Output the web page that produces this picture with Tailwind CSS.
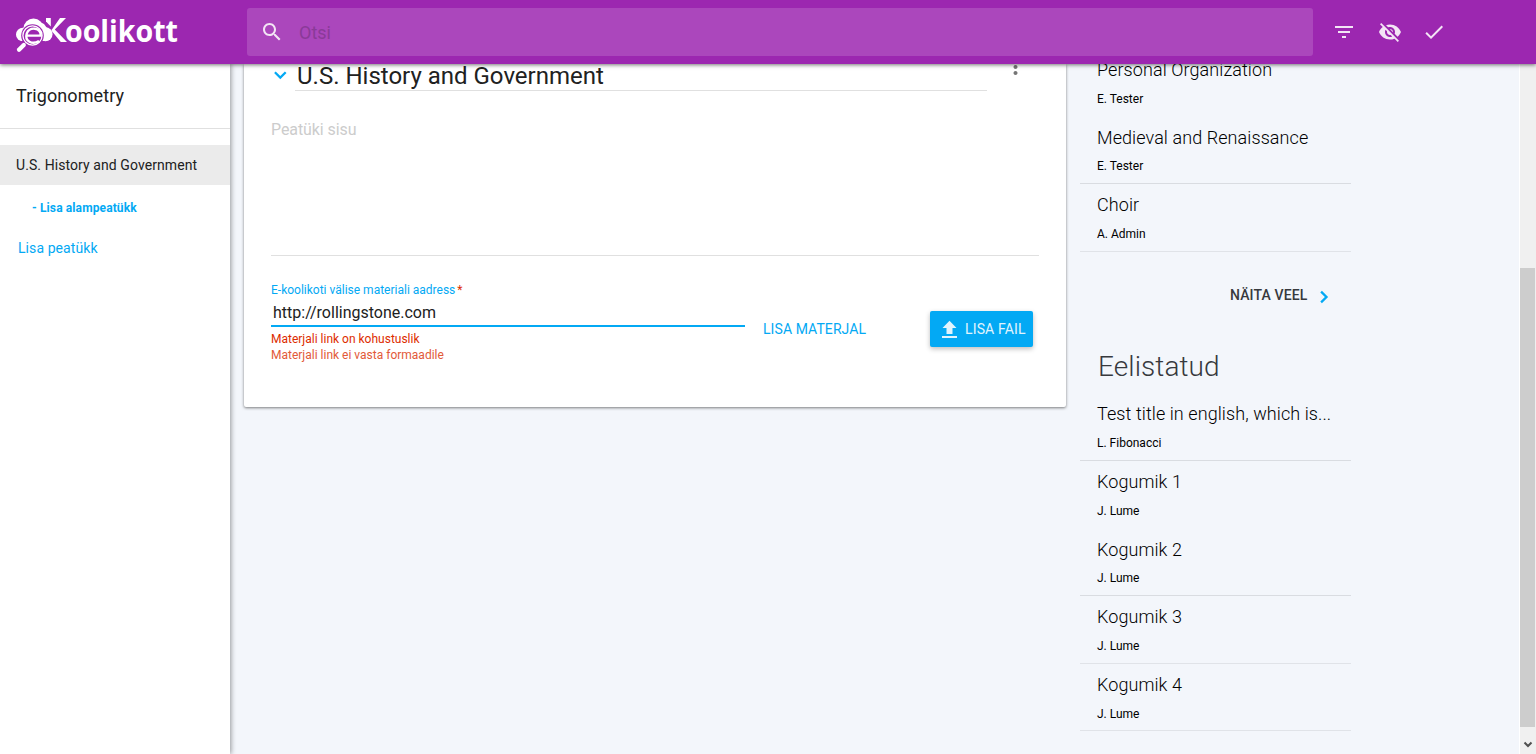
<!DOCTYPE html>
<html lang="et">
<head>
<meta charset="utf-8">
<title>e-Koolikott</title>
<script src="https://cdn.jsdelivr.net/npm/@tailwindcss/browser@4"></script>
</head>
<body class="h-[754px] w-[1536px] overflow-hidden bg-[#f3f6fb] font-[Roboto,sans-serif] tracking-[0.005em] text-[#212121] flex flex-col">
<header class="relative z-10 h-16 shrink-0 bg-[#9c27b0] flex items-center shadow-[0_1px_4px_rgba(0,0,0,0.55)]">
  <svg class="ml-4 shrink-0 overflow-visible" width="166" height="40" viewBox="0 0 166 40" fill="#fff">
    <circle cx="17.500" cy="16.500" r="10"/>
    <circle cx="6.800" cy="22.500" r="6.800"/>
    <path d="M7 28V16L18 7l10 5 6 8-4 9Z"/>
    <circle cx="29.500" cy="22.300" r="7"/>
    <path d="M30 6h4.800v8.500L30 9.500Z"/>
    <path d="M44 6h6L38.800 17.500 51 30h-6.200L35.300 18.500Z"/>
    <circle cx="16.500" cy="23.500" r="11.300" fill="#9c27b0"/>
    <path d="M9 31 2.500 38" stroke="#9c27b0" stroke-width="7"/>
    <circle cx="16.500" cy="23.500" r="9.600" fill="none" stroke="#fff" stroke-width="1.300"/>
    <path d="M7.800 33 3 37.800" stroke="#fff" stroke-width="4.200" stroke-linecap="round"/>
    <path d="M10.500 23.600h14.200c.3-8.600-11.200-9-13.900-2.200-2.600 8.200 5.700 11.600 12.200 7.600" fill="none" stroke="#fff" stroke-width="2.400"/>
    <text x="49" y="29.500" font-family="Open Sans, sans-serif" font-weight="700" font-size="31" letter-spacing="0" textLength="113" lengthAdjust="spacingAndGlyphs">oolikott</text>
  </svg>
  <div class="ml-[65px] w-[1066px] h-12 rounded-[3px] bg-[#ab47bc] flex items-center">
    <svg class="ml-[13px]" width="24" height="24" viewBox="0 0 24 24" fill="#f3e5f5"><path d="M15.500 14h-.79l-.28-.27C15.410 12.590 16 11.110 16 9.500 16 5.910 13.090 3 9.500 3S3 5.910 3 9.500 5.910 16 9.500 16c1.610 0 3.090-.59 4.230-1.570l.27.28v.79l5 4.990L20.490 19l-4.990-5zm-6 0C7.010 14 5 11.990 5 9.500S7.010 5 9.500 5 14 7.010 14 9.500 11.990 14 9.500 14z"/></svg>
    <span class="ml-[15px] text-[18px] tracking-normal text-[#8a3a98]">Otsi</span>
  </div>
  <div class="ml-[19px] flex items-center gap-[21px] text-[#f3e5f5]">
    <svg width="24" height="24" viewBox="0 0 24 24" fill="currentColor"><path d="M10 18h4v-2h-4v2zM3 6v2h18V6H3zm3 7h12v-2H6v2z"/></svg>
    <svg class="ml-px -mr-px" width="24" height="24" viewBox="0 0 24 24" fill="currentColor"><path d="M12 7c2.760 0 5 2.240 5 5 0 .65-.13 1.260-.36 1.830l2.920 2.920c1.510-1.260 2.700-2.890 3.430-4.750-1.730-4.390-6-7.500-11-7.500-1.400 0-2.740.25-3.980.7l2.160 2.160C10.740 7.130 11.350 7 12 7zM2 4.270l2.280 2.280.46.46C3.080 8.300 1.780 10.020 1 12c1.730 4.390 6 7.500 11 7.500 1.550 0 3.030-.3 4.380-.84l.42.42L19.730 22 21 20.730 3.270 3 2 4.270zM7.530 9.800l1.550 1.550c-.05.21-.08.43-.08.65 0 1.660 1.340 3 3 3 .22 0 .44-.03.65-.08l1.550 1.550c-.67.33-1.410.53-2.200.53-2.760 0-5-2.240-5-5 0-.79.2-1.530.53-2.200zm4.310-.78l3.150 3.150.02-.16c0-1.660-1.340-3-3-3l-.17.01z"/></svg>
    <svg width="24" height="24" viewBox="0 0 24 24" fill="currentColor"><path d="M9 16.170L4.830 12l-1.420 1.410L9 19 21 7l-1.410-1.410z"/></svg>
  </div>
</header>

<div class="flex h-[690px] shrink-0 overflow-hidden">
  <aside class="relative w-[230px] shrink-0 bg-white shadow-[1px_0_5px_rgba(0,0,0,0.4)]">
    <h2 class="h-[65px] border-b border-[#e0e0e0] px-4 text-[18px] leading-[63px]">Trigonometry</h2>
    <div class="mt-4 h-10 bg-[#ebebeb] px-4 text-sm leading-10">U.S. History and Government</div>
    <div class="pl-8 text-xs font-bold leading-[46px] tracking-[0.01em] text-[#03a9f4]">- Lisa alampeatükk</div>
    <div class="pl-[18px] text-sm leading-[34px] text-[#03a9f4]">Lisa peatükk</div>
  </aside>

  <main class="ml-[14px] h-[343px] w-[822px] shrink-0 rounded-b-[2px] bg-white px-[27px] shadow-[0_1px_3px_rgba(0,0,0,0.5)]">
    <div class="flex h-[27px]">
      <svg class="-ml-[3px] mt-[-1px]" width="24" height="24" viewBox="0 0 24 24" fill="#03a9f4"><path d="M7.710 8.390 12.300 12.970l4.590-4.580L18.500 10l-6.200 6.200L6.100 10Z"/></svg>
      <h1 class="ml-[3px] w-[692px] border-b border-[#e0e0e0] pl-[2px] text-[24px] leading-[25px] tracking-normal">U.S. History and Government</h1>
      <svg class="ml-4 -mt-[5px]" width="24" height="24" viewBox="0 0 24 24" fill="#757575"><path d="M12.500 10c1.100 0 2-.9 2-2s-.9-2-2-2-2 .9-2 2 .9 2 2 2zm0 2c-1.100 0-2 .9-2 2s.9 2 2 2 2-.9 2-2-.9-2-2-2z"/></svg>
    </div>
    <div class="h-[165px] border-b border-[#e0e0e0] pt-[27px] text-base leading-6 tracking-[-0.005em] text-[#ccc]">Peatüki sisu</div>
    <div class="flex">
      <div class="w-[474px] pt-[24px]">
        <div class="text-xs leading-5 tracking-normal text-[#03a9f4]">E-koolikoti välise materiali aadress<span class="ml-[2px] text-[#dd2c00]">*</span></div>
        <div class="h-[27px] border-b-2 border-[#03a9f4] pl-[2px] text-base leading-[26px] tracking-normal">http://rollingstone.com</div>
        <div class="mt-1 text-xs leading-4 tracking-normal text-[#dd2c00]">Materjali link on kohustuslik</div>
        <div class="text-xs leading-4 tracking-normal text-[#e25a38]">Materjali link ei vasta formaadile</div>
      </div>
      <div class="ml-[18px] mt-[55px] w-[167px] text-sm leading-9 text-[#03a9f4]">LISA MATERJAL</div>
      <div class="mt-[55px] flex h-9 w-[103px] items-center rounded-[2px] bg-[#03a9f4] pl-[7px] text-sm tracking-[0.01em] text-[#e1f4fd] shadow-[0_2px_5px_rgba(0,0,0,0.26)]">
        <svg width="24" height="24" viewBox="0 0 24 24" fill="currentColor"><path d="M9.500 17h6v-6h4l-7-7.300-7 7.300h4zm-4.500 2h15v2H5z"/></svg>
        <span class="ml-1 whitespace-nowrap">LISA FAIL</span>
      </div>
    </div>
  </main>

  <section class="ml-[14px] w-[271px] shrink-0 text-black">
    <div class="-mt-4 h-[68px] border-b border-transparent pl-[17px]"><div class="pt-[8px] text-[18px] font-light leading-7">Personal Organization</div><div class="mt-[5px] text-xs leading-5 tracking-normal">E. Tester</div></div>
    <div class="h-[68px] border-b border-[#d9dce1] pl-[17px]"><div class="pt-[8px] text-[18px] font-light leading-7">Medieval and Renaissance</div><div class="mt-[4px] text-xs leading-5 tracking-normal">E. Tester</div></div>
    <div class="h-[68px] border-b border-[#e0e3e8] pl-[17px]"><div class="pt-[7px] text-[18px] font-light leading-7">Choir</div><div class="mt-[5px] text-xs leading-5 tracking-normal">A. Admin</div></div>
    <div class="mt-[25px] flex h-9 items-center pl-[150px] text-sm font-medium tracking-[0.01em] text-[#37393d]">NÄITA VEEL<svg class="ml-[4px] mt-[3px]" width="24" height="24" viewBox="0 0 24 24" fill="#03a9f4"><path d="M8.300 7.400 9.900 5.800l6.200 6.200-6.200 6.200-1.600-1.600 4.600-4.600Z"/></svg></div>
    <h2 class="mt-[34px] h-10 pl-[18px] text-[28px] font-light leading-10 text-[#37393d]">Eelistatud</h2>
    <div class="mt-[6px] h-[68px] border-b border-[#d9dce1] pl-[17px]"><div class="pt-[7px] text-[18px] font-light leading-7">Test title in english, which is...</div><div class="mt-[5px] text-xs leading-5 tracking-normal">L. Fibonacci</div></div>
    <div class="h-[68px] border-b border-transparent pl-[17px]"><div class="pt-[7px] text-[18px] font-light leading-7">Kogumik 1</div><div class="mt-[5px] text-xs leading-5 tracking-normal">J. Lume</div></div>
    <div class="h-[67px] border-b border-[#d9dce1] pl-[17px]"><div class="pt-[7px] text-[18px] font-light leading-7">Kogumik 2</div><div class="mt-[4px] text-xs leading-5 tracking-normal">J. Lume</div></div>
    <div class="h-[68px] border-b border-[#e0e3e8] pl-[17px]"><div class="pt-[7px] text-[18px] font-light leading-7">Kogumik 3</div><div class="mt-[5px] text-xs leading-5 tracking-normal">J. Lume</div></div>
    <div class="h-[67px] border-b border-[#e0e3e8] pl-[17px]"><div class="pt-[7px] text-[18px] font-light leading-7">Kogumik 4</div><div class="mt-[5px] text-xs leading-5 tracking-normal">J. Lume</div></div>
  </section>

  <div class="ml-auto flex w-[17px] flex-col border-l border-white bg-[#f0f0f0]">
    <div class="mt-[204px] h-[459px] w-[15px] bg-[#cdcdcd]"></div>
    <svg class="ml-[2px] mt-[12px]" width="12" height="12" viewBox="0 0 12 12" fill="none" stroke="#505050" stroke-width="2"><path d="m2.500 3.500 3.500 3.500 3.500-3.500"/></svg>
  </div>
</div>
</body>
</html>
